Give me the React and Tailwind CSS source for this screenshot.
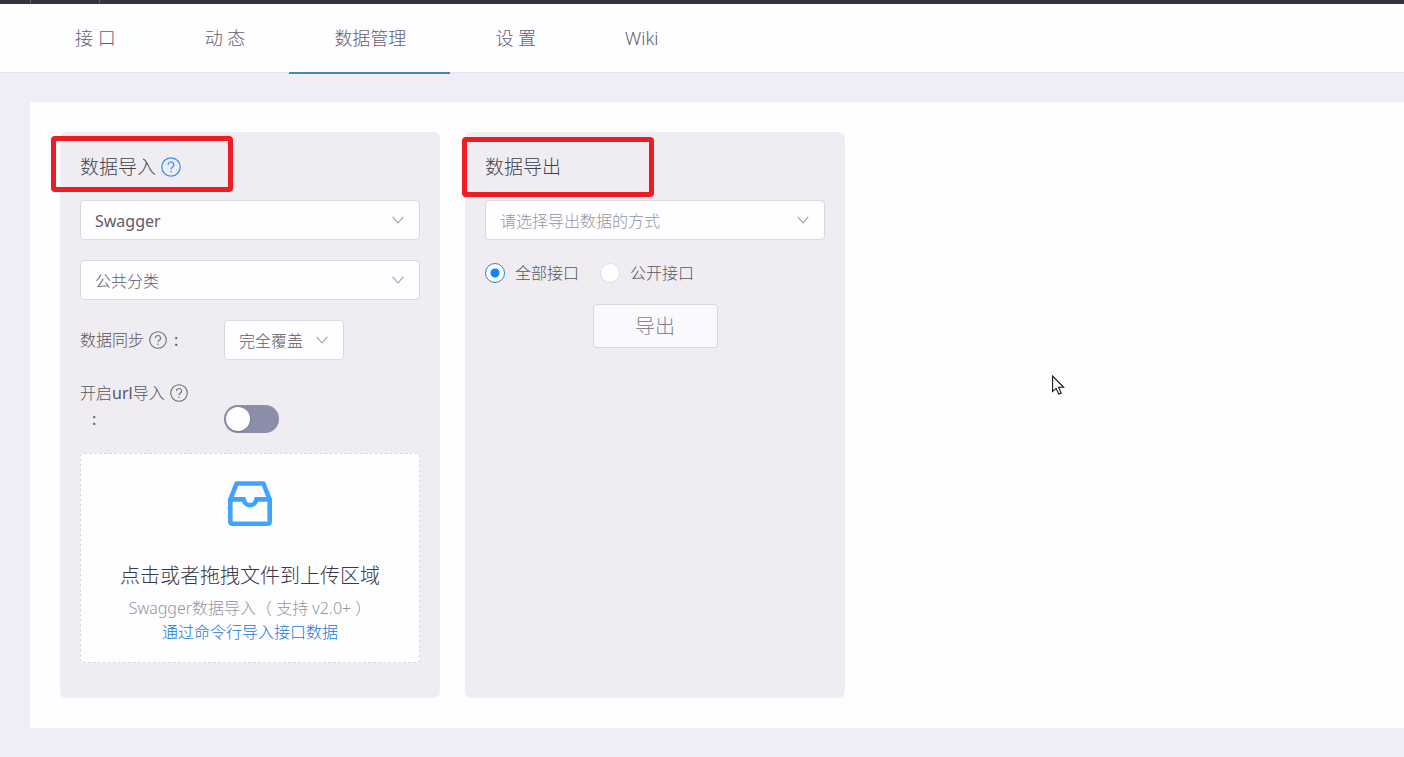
import { useState } from 'react';

const tabs = ['接 口', '动 态', '数据管理', '设 置', 'Wiki'];

function QuestionIcon({ className }) {
  return (
    <svg viewBox="0 0 20 20" fill="none" stroke="currentColor" className={className}>
      <circle cx="10" cy="10" r="9.2" strokeWidth="1.2" />
      <path d="M7.2 7.9a2.8 2.8 0 1 1 4.2 2.3c-1 .5-1.4 1-1.4 2.2" strokeWidth="1.2" />
      <circle cx="10" cy="14.7" r=".8" fill="currentColor" stroke="none" />
    </svg>
  );
}

function InboxIcon() {
  return (
    <svg viewBox="0 0 44 46" fill="none" stroke="#3fa3ff" strokeWidth="4.6" className="h-[46px] w-11">
      <path d="M8.6 2.5h26.8L41.7 18.6v22.1a2 2 0 0 1-2 2H4.3a2 2 0 0 1-2-2V18.6z" strokeLinejoin="round" />
      <path d="M2.3 18.4h13.3c.8 3.8 3.2 5.7 6.4 5.7s5.6-1.9 6.4-5.7h13.3" />
    </svg>
  );
}

function Select({ label, options, muted, className = '' }) {
  return (
    <div className={`relative ${className}`}>
      <select
        aria-label={label}
        className={`h-10 w-full appearance-none rounded border border-[#d9d8e2] bg-[#fefdff] pt-0.5 pr-8 pl-3.5 text-base outline-none ${
          muted ? 'text-[#96959f]' : 'text-[#5c5b68]'
        }`}
      >
        {options.map((option) => (
          <option key={option}>{option}</option>
        ))}
      </select>
      <svg
        viewBox="0 0 12 8"
        fill="none"
        stroke="#9c9ba4"
        strokeWidth="1.1"
        className="pointer-events-none absolute top-4 right-4 h-2 w-3"
      >
        <path d="M.8.8 6 7 11.2.8" />
      </svg>
    </div>
  );
}

function Radio({ label, checked, onChange }) {
  return (
    <label className="flex items-center gap-2.5">
      <input
        type="radio"
        name="scope"
        checked={checked}
        onChange={onChange}
        className="size-5 appearance-none rounded-full border border-[#dfdde6] bg-[#fefdff] checked:border-[#1c86f2] checked:bg-[radial-gradient(circle,#1084ff_0_4px,#fefdff_5px)]"
      />
      {label}
    </label>
  );
}

export default function App() {
  const [urlImport, setUrlImport] = useState(false);
  const [scope, setScope] = useState('all');

  return (
    <div className="relative min-h-screen overflow-hidden bg-[#f0edf9] font-['Noto_Sans','Noto_Sans_CJK_SC',sans-serif] text-base font-light text-[#565562]">
      {/* Bottom edge of the dark site header */}
      <div className="flex h-1 bg-[#343340] pl-[30px]">
        <div className="w-[70px] border-x border-[#5b5a66]" />
      </div>

      <nav className="flex h-[69px] border-b border-[#e6e4ee] bg-[#fefdff] pl-[30px] text-lg text-[#62606f]">
        {tabs.map((tab) => (
          <a
            key={tab}
            href="#"
            className={`flex h-[70px] items-center border-b-2 pr-11 pl-[45px] ${
              tab === '数据管理' ? 'border-[#3f8ab8]' : 'border-transparent'
            }`}
          >
            {tab}
          </a>
        ))}
      </nav>

      <main className="mt-[29px] mb-[29px] ml-[30px] flex gap-[25px] bg-[#fefdff] p-[30px]">
        {/* Import */}
        <section className="relative w-[380px] rounded-md bg-[#efedf1] px-5 pt-5 pb-[35px]">
          <div className="pointer-events-none absolute top-1 -left-[9px] h-14 w-[182px] rounded-sm border-5 border-[#ee1c25]" />
          <h2 className="mb-4.5 flex h-[30px] items-center gap-[5px] text-[19px] text-[#413f4e]">
            数据导入
            <QuestionIcon className="size-5 text-[#3a8ee6]" />
          </h2>
          <Select label="导入方式" options={['Swagger']} className="mb-5 font-normal" />
          <Select label="分类" options={['公共分类']} className="mb-5" />
          <div className="mb-5 flex items-center">
            <div className="flex w-36 items-center gap-[5px]">
              数据同步
              <QuestionIcon className="size-[18px] text-[#6d6c78]" />
              <span className="pl-0.5 font-normal">:</span>
            </div>
            <Select label="数据同步" options={['完全覆盖']} className="w-[120px]" />
          </div>
          <div className="mb-5 flex items-start">
            <div className="w-36 leading-[26px]">
              <div className="flex items-center gap-[5px]">
                <span>
                  开启<span className="font-normal">url</span>导入
                </span>
                <QuestionIcon className="size-[18px] text-[#6d6c78]" />
              </div>
              <div className="pl-3 font-normal">:</div>
            </div>
            <button
              type="button"
              role="switch"
              aria-label="开启url导入"
              aria-checked={urlImport}
              onClick={() => setUrlImport(!urlImport)}
              className={`mt-[25px] flex h-7 w-[55px] items-center rounded-full px-0.5 ${
                urlImport ? 'justify-end bg-[#1c86f2]' : 'bg-[#8b8da9]'
              }`}
            >
              <span className="size-6 rounded-full bg-[#fefdff] shadow" />
            </button>
          </div>
          <button
            type="button"
            className="flex w-full flex-col items-center rounded border border-dashed border-[#d9d8e0] bg-[#fefdff] pt-[27px] pb-[18px]"
          >
            <InboxIcon />
            <span className="mt-[34px] mb-[5px] text-xl leading-[30px] text-[#393845]">点击或者拖拽文件到上传区域</span>
            <span className="leading-6 text-[#96959f]">Swagger数据导入（ 支持 v2.0+ ）</span>
            <span className="leading-6 text-[#1479d6]">通过命令行导入接口数据</span>
          </button>
        </section>

        {/* Export */}
        <section className="relative w-[380px] rounded-md bg-[#efedf1] px-5 pt-5">
          <div className="pointer-events-none absolute top-[5px] -left-[3px] h-[60px] w-48 rounded-sm border-5 border-[#ee1c25]" />
          <h2 className="mb-4.5 flex h-[30px] items-center text-[19px] text-[#413f4e]">数据导出</h2>
          <Select label="导出方式" options={['请选择导出数据的方式']} muted className="mb-5" />
          <div className="mb-4.5 flex h-[26px] items-center gap-[21px]">
            <Radio label="全部接口" checked={scope === 'all'} onChange={() => setScope('all')} />
            <Radio label="公开接口" checked={scope === 'open'} onChange={() => setScope('open')} />
          </div>
          <button
            type="button"
            className="mx-auto block h-11 w-[125px] rounded border border-[#d9d8e2] bg-[#faf9fd] pt-0.5 text-xl text-[#858494]"
          >
            导出
          </button>
        </section>
      </main>

      {/* Mouse pointer */}
      <svg viewBox="0 0 13 20" className="pointer-events-none absolute top-[375px] left-[1052px] h-5 w-[13px]">
        <path
          d="M.6 1v15.6l3.5-3.3 2.7 5.8 2.4-1-2.6-5.8h5z"
          fill="#fff"
          stroke="#15151b"
          strokeWidth="1.1"
        />
      </svg>
    </div>
  );
}
